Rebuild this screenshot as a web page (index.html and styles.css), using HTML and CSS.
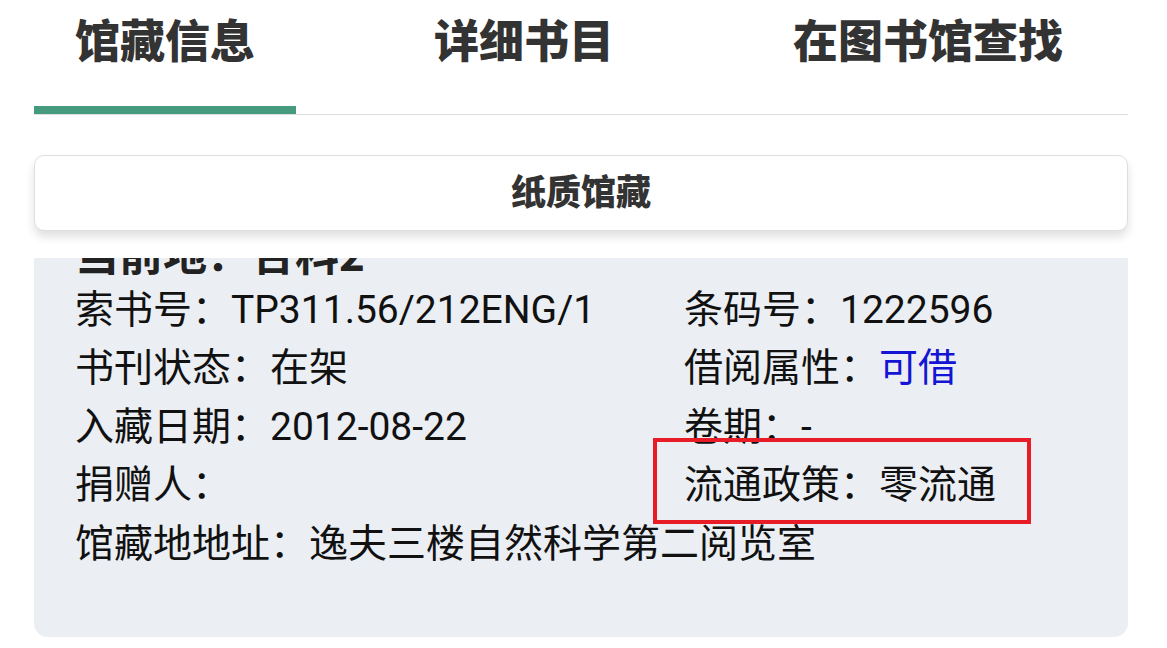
FILE: index.html
```html
<!DOCTYPE html>
<html lang="zh-CN">
<head>
<meta charset="utf-8">
<title>馆藏信息</title>
<link rel="stylesheet" href="styles.css">
</head>
<body>
<div class="page">
  <nav class="tabs">
    <div class="tab active">馆藏信息</div>
    <div class="tab">详细书目</div>
    <div class="tab">在图书馆查找</div>
  </nav>
  <div class="card">纸质馆藏</div>
  <div class="viewport">
    <div class="holding">
      <div class="holding-title">当前地：合科2</div>
      <div class="grid">
        <div class="cell">索书号：TP311.56/212ENG/1</div>
        <div class="cell">条码号：1222596</div>
        <div class="cell">书刊状态：在架</div>
        <div class="cell">借阅属性：<span class="link">可借</span></div>
        <div class="cell">入藏日期：2012-08-22</div>
        <div class="cell">卷期：-</div>
        <div class="cell">捐赠人：</div>
        <div class="cell marked">流通政策：零流通<span class="highlight"></span></div>
        <div class="cell full">馆藏地地址：逸夫三楼自然科学第二阅览室</div>
      </div>
    </div>
  </div>
</div>
</body>
</html>
```
FILE: styles.css
```css
html, body {
  margin: 0;
  padding: 0;
  background: #ffffff;
}

body {
  font-family: Roboto, "Noto Sans CJK SC", sans-serif;
  color: #111111;
}

.page {
  padding: 0 39px 0 34px;
}

.tabs {
  display: flex;
  gap: 97px;
  height: 114px;
  border-bottom: 1px solid #dddddd;
}

.tab {
  box-sizing: border-box;
  height: 114px;
  padding: 10px 41px 0;
  font-family: "Noto Sans CJK SC", sans-serif;
  font-size: 45px;
  line-height: 58px;
  font-weight: 900;
  color: #333333;
  white-space: nowrap;
}

.tab.active {
  border-bottom: 8px solid #469b7e;
}

.card {
  margin-top: 40px;
  height: 76px;
  box-sizing: border-box;
  padding-bottom: 8px;
  border: 1px solid #dedede;
  border-radius: 10px;
  background: #ffffff;
  box-shadow: 0 6px 10px rgba(0, 0, 0, 0.12);
  display: flex;
  align-items: center;
  justify-content: center;
  font-family: "Noto Sans CJK SC", sans-serif;
  font-size: 35px;
  font-weight: 900;
  color: #333333;
  position: relative;
  z-index: 1;
}

.viewport {
  margin-top: 27px;
  height: 379px;
  overflow: hidden;
  background: #ebeef3;
  border-radius: 0 0 14px 14px;
}

.holding {
  margin-top: -34px;
  padding: 0 41px;
}

.holding-title {
  font-family: "Noto Sans CJK SC", sans-serif;
  font-size: 44px;
  font-weight: 700;
  line-height: 56.5px;
  color: #222222;
}

.grid {
  display: grid;
  grid-template-columns: 609px 1fr;
}

.cell {
  font-size: 39px;
  line-height: 58.5px;
  white-space: nowrap;
  color: #111111;
}

.cell.full {
  grid-column: 1 / -1;
}

.link {
  color: #1414d4;
}

.marked {
  position: relative;
}

.highlight {
  position: absolute;
  top: -18px;
  left: -31px;
  width: 378px;
  height: 86px;
  box-sizing: border-box;
  border: 4px solid #e81c26;
}
```
